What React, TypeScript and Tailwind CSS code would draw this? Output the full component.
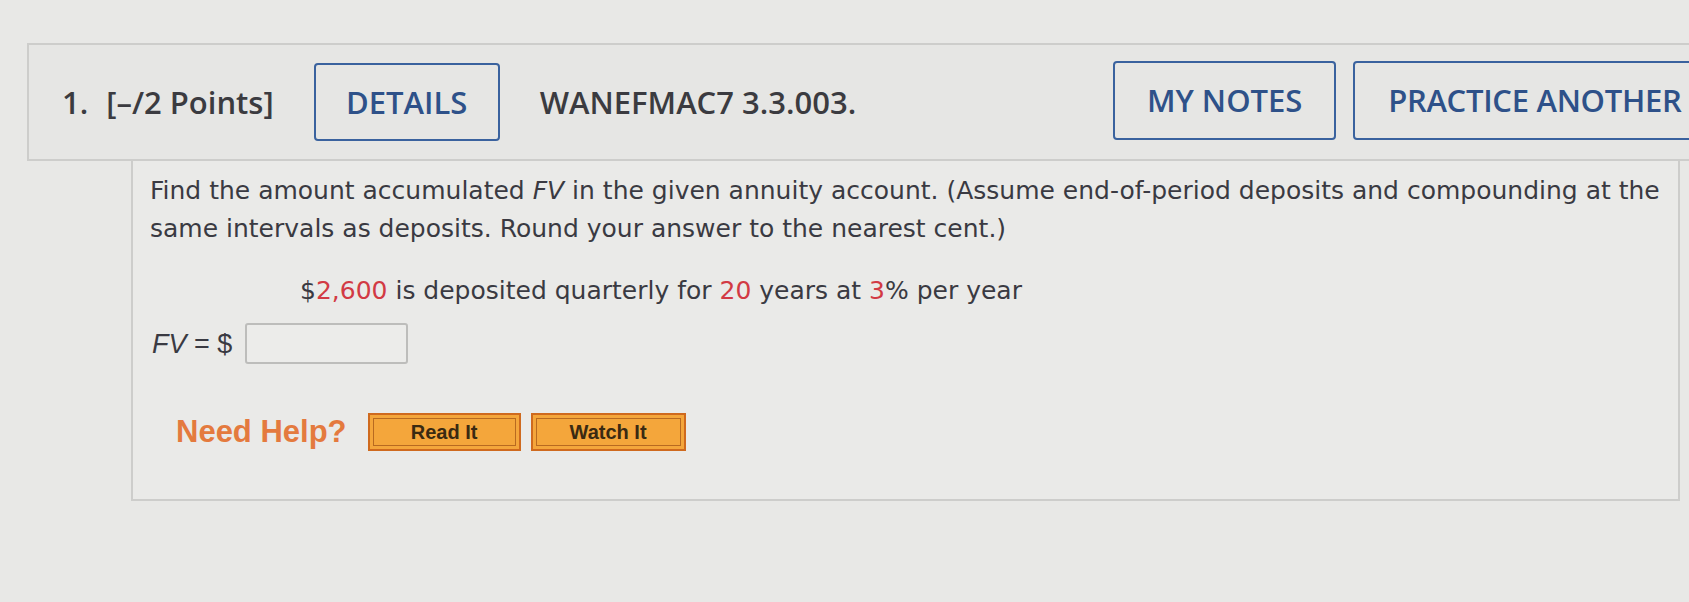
export default function App() {
  const red = 'text-[#d23a44]'

  return (
    <div className="w-full h-[602px] overflow-hidden bg-[#e8e8e6] pt-[43px] pl-[27px]">
      {/* question header */}
      <div className="w-[1745px] h-[118px] flex items-center border-2 border-[#cdcdcb] bg-[#e6e6e4] pl-[33px] pr-[17px] font-['Open_Sans',sans-serif] font-semibold text-[#3b3b40] text-[31px]">
        <span>1.</span>
        <span className="ml-[18px]">[–/2 Points]</span>
        <button className="ml-[40px] h-[78px] w-[186px] rounded-[4px] border-2 border-[#3a629e] text-[#2e5189]">
          DETAILS
        </button>
        <span className="ml-[40px]">WANEFMAC7 3.3.003.</span>
        <div className="ml-[257px] flex items-center gap-[17px] -mt-[4px]">
          <button className="h-[79px] w-[223px] rounded-[4px] border-2 border-[#3a629e] text-[#2e5189]">
            MY NOTES
          </button>
          <button className="h-[79px] w-[372px] rounded-[4px] border-2 border-[#3a629e] text-[#2e5189] text-left pl-[33px] tracking-[-0.3px]">
            PRACTICE ANOTHER
          </button>
        </div>
      </div>

      {/* question body */}
      <div className="ml-[104px] w-[1549px] h-[340px] border-x-2 border-b-2 border-[#cdcdcb] bg-[#eaeae8] pl-[17px] pt-[11px] text-[#3a3a42] font-['DejaVu_Sans',sans-serif] text-[25px] leading-[38px]">
        <p>
          Find the amount accumulated <i>FV</i> in the given annuity account. (Assume end-of-period deposits and compounding at the
          <br />
          same intervals as deposits. Round your answer to the nearest cent.)
        </p>

        <p className="mt-[24px] ml-[150px]">
          $<span className={red}>2,600</span> is deposited quarterly for <span className={red}>20</span> years at{' '}
          <span className={red}>3</span>% per year
        </p>

        <div className="mt-[13px] flex items-center h-[41px] font-['Liberation_Sans',sans-serif] text-[27px]">
          <span className="ml-[2px] whitespace-pre">
            <i>FV</i> = $
          </span>
          <div className="ml-[13px] w-[163px] h-[41px] rounded-[3px] border-2 border-[#bdbdbb] bg-[#ececea]" />
        </div>

        <div className="mt-[49px] flex items-center font-['Liberation_Sans',sans-serif]">
          <span className="ml-[26px] text-[31px] font-bold text-[#e47a3e]">Need Help?</span>
          <button className="ml-[21px] w-[153px] h-[38px] border-2 border-[#cf6a1e] bg-[#f4a63b] p-[3px]">
            <span className="flex h-full w-full items-center justify-center border border-[#b86a20] text-[20px] font-bold leading-none text-[#3a2a12]">
              Read It
            </span>
          </button>
          <button className="ml-[10px] w-[155px] h-[38px] border-2 border-[#cf6a1e] bg-[#f4a63b] p-[3px]">
            <span className="flex h-full w-full items-center justify-center border border-[#b86a20] text-[20px] font-bold leading-none text-[#3a2a12]">
              Watch It
            </span>
          </button>
        </div>
      </div>
    </div>
  )
}
